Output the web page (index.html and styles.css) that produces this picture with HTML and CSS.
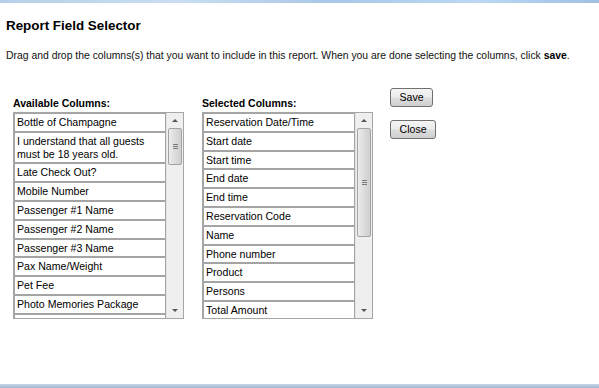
FILE: index.html
```html
<!DOCTYPE html>
<html>
<head>
<meta charset="utf-8">
<link rel="stylesheet" href="styles.css">
</head>
<body>
<div class="page">
  <div class="topbar"></div>
  <div class="content">
    <h1 class="title">Report Field Selector</h1>
    <p class="desc">Drag and drop the columns(s) that you want to include in this report. When you are done selecting the columns, click <b>save</b>.</p>
    <div class="row">
      <div class="col">
        <div class="label">Available Columns:</div>
        <div class="listbox">
          <div class="items">
            <div class="item">Bottle of Champagne</div>
            <div class="item">I understand that all guests must be 18 years old.</div>
            <div class="item">Late Check Out?</div>
            <div class="item">Mobile Number</div>
            <div class="item">Passenger #1 Name</div>
            <div class="item">Passenger #2 Name</div>
            <div class="item">Passenger #3 Name</div>
            <div class="item">Pax Name/Weight</div>
            <div class="item">Pet Fee</div>
            <div class="item">Photo Memories Package</div>
            <div class="item item-empty"></div>
          </div>
          <div class="sbar">
            <div class="arrow up"></div>
            <div class="track">
              <div class="thumb thumb-a"><span class="grip"></span></div>
            </div>
            <div class="arrow down"></div>
          </div>
        </div>
      </div>
      <div class="col">
        <div class="label">Selected Columns:</div>
        <div class="listbox">
          <div class="items">
            <div class="item">Reservation Date/Time</div>
            <div class="item">Start date</div>
            <div class="item">Start time</div>
            <div class="item">End date</div>
            <div class="item">End time</div>
            <div class="item">Reservation Code</div>
            <div class="item">Name</div>
            <div class="item">Phone number</div>
            <div class="item">Product</div>
            <div class="item">Persons</div>
            <div class="item">Total Amount</div>
          </div>
          <div class="sbar">
            <div class="arrow up"></div>
            <div class="track">
              <div class="thumb thumb-b"><span class="grip"></span></div>
            </div>
            <div class="arrow down"></div>
          </div>
        </div>
      </div>
      <div class="actions">
        <button class="btn">Save</button>
        <button class="btn">Close</button>
      </div>
    </div>
  </div>
  <div class="bottombar"></div>
</div>
</body>
</html>
```

FILE: styles.css
```css
html, body {
  margin: 0;
  padding: 0;
  background: #fff;
}
body {
  font-family: "Liberation Sans", Arial, sans-serif;
  color: #111;
}
.page {
  width: 599px;
  height: 388px;
  display: flex;
  flex-direction: column;
  overflow: hidden;
}
.topbar {
  height: 3px;
  flex: none;
  background: linear-gradient(90deg, #b7cfe8 0%, #c9def3 30%, #a9c7e6 55%, #bcd8f4 80%, #9fc0e2 100%);
}
.content {
  flex: 1;
  padding: 0 6px;
}
.title {
  margin: 15px 0 0;
  font-size: 13.4px;
  line-height: 16px;
  font-weight: bold;
  color: #000;
}
.desc {
  margin: 15px 0 0;
  font-size: 10.4px;
  line-height: 14px;
}
.desc b {
  font-weight: bold;
  color: #000;
}
.row {
  display: flex;
  align-items: flex-start;
  margin: 25px 0 0 7px;
}
.col {
  width: 171px;
  padding-top: 8px;
  margin-right: 18px;
}
.col + .col {
  margin-right: 17px;
}
.label {
  font-size: 10.5px;
  font-weight: bold;
  line-height: 14px;
  margin-bottom: 2px;
  color: #000;
}
.listbox {
  height: 207px;
  box-sizing: border-box;
  border: 1px solid #a6a6a6;
  display: flex;
  overflow: hidden;
  background: #fff;
}
.items {
  flex: 1;
  overflow: hidden;
}
.item {
  border: 1px solid #a4a4a4;
  padding: 2px;
  font-size: 10.6px;
  line-height: 12.8px;
  color: #000;
  background: #fff;
}
.item-empty {
  height: 12.8px;
}
.sbar {
  width: 16px;
  flex: none;
  display: flex;
  flex-direction: column;
  background: #efefef;
  border-left: 1px solid #e2e2e2;
}
.arrow {
  height: 15px;
  flex: none;
  position: relative;
}
.arrow::after {
  content: "";
  position: absolute;
  left: 5px;
  width: 0;
  height: 0;
  border-left: 3px solid transparent;
  border-right: 3px solid transparent;
}
.arrow.up::after {
  top: 6px;
  border-bottom: 3px solid #555;
}
.arrow.down::after {
  top: 6px;
  border-top: 3px solid #555;
}
.track {
  flex: 1;
  padding: 0 1px;
}
.thumb {
  box-sizing: border-box;
  border: 1px solid #a3a3a3;
  border-radius: 2px;
  background: linear-gradient(90deg, #ececec, #dcdcdc 50%, #cfcfcf);
  display: flex;
  align-items: center;
  justify-content: center;
}
.thumb-a {
  height: 37px;
}
.thumb-b {
  height: 109px;
}
.grip {
  width: 5px;
  height: 5px;
  background: linear-gradient(180deg, #7a7a7a 0 1px, transparent 1px 2px, #7a7a7a 2px 3px, transparent 3px 4px, #7a7a7a 4px 5px);
}
.actions {
  display: flex;
  flex-direction: column;
  align-items: flex-start;
  gap: 13px;
}
.btn {
  font-family: "Liberation Sans", Arial, sans-serif;
  font-size: 10.6px;
  line-height: 13px;
  height: 19px;
  padding: 0 8.5px;
  color: #000;
  border: 1px solid #707070;
  border-radius: 3px;
  background: linear-gradient(180deg, #f4f4f4 0%, #ebebeb 48%, #dddddd 52%, #cfcfcf 100%);
}
.bottombar {
  height: 4px;
  flex: none;
  background: linear-gradient(180deg, #c8d6e6 0, #9fb6d0 100%);
}
```
